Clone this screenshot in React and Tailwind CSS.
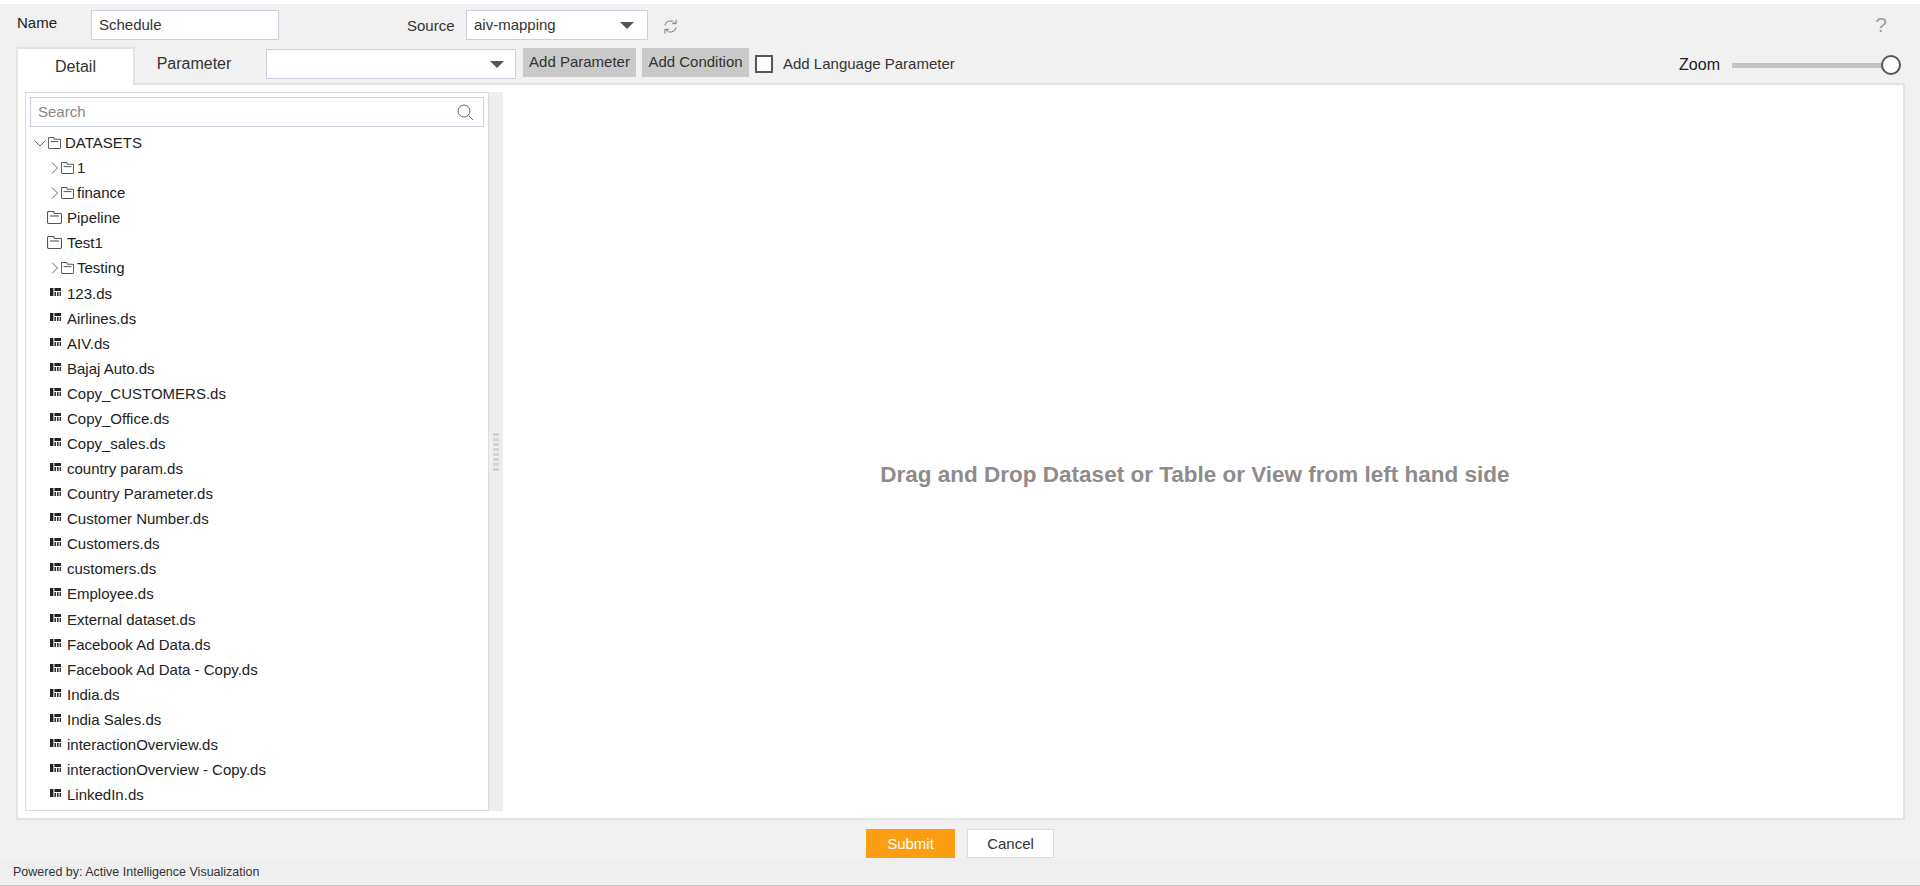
import React from "react";

const Caret = () => (
  <svg width="14" height="7" viewBox="0 0 14 7" className="block"><path d="M0 0H14L7 7Z" fill="#555" /></svg>
);
const Chevron = ({ down }) => (
  <svg width="12" height="12" viewBox="0 0 12 12" fill="none" stroke="#666" strokeWidth="1" className="block shrink-0">
    {down ? <path d="M0.5 3.5L6 9L11.5 3.5" /> : <path d="M3 0.5L8.5 6L3 11.5" />}
  </svg>
);
const Folder = ({ w = 13 }) => (
  <svg width={w} height={w === 13 ? 12 : 13} viewBox="0 0 15 13" preserveAspectRatio="none" fill="none" stroke="#555" strokeWidth="1.1" className="block shrink-0">
    <path d="M0.5 2.5V11A1.5 1.5 0 0 0 2 12.5H13A1.5 1.5 0 0 0 14.5 11V3.5A1 1 0 0 0 13.5 2.5H7.5L6.5 0.5H1.5A1 1 0 0 0 0.5 1.5Z" />
    <path d="M3 5H12" />
  </svg>
);
const Ds = () => (
  <svg width="11" height="8" viewBox="0 0 11 8" className="block shrink-0 -mt-[3px]">
    <path d="M0 0H3.4V8H0Z" fill="#222" />
    <path d="M4.4 0H11V3H4.4Z" fill="#222" />
    <path d="M4.4 4H6V8H4.4ZM7 4H8.6V8H7ZM9.6 4H11V8H9.6Z" fill="#333" />
  </svg>
);

const dsFiles = [
  "123.ds", "Airlines.ds", "AIV.ds", "Bajaj Auto.ds", "Copy_CUSTOMERS.ds", "Copy_Office.ds", "Copy_sales.ds",
  "country param.ds", "Country Parameter.ds", "Customer Number.ds", "Customers.ds", "customers.ds", "Employee.ds",
  "External dataset.ds", "Facebook Ad Data.ds", "Facebook Ad Data - Copy.ds", "India.ds", "India Sales.ds",
  "interactionOverview.ds", "interactionOverview - Copy.ds", "LinkedIn.ds",
];

const Row = ({ children, pl }) => (
  <div className={`flex h-[25.08px] items-center ${pl}`}>{children}</div>
);

const Tree = () => (
  <div className="text-[15px] leading-none text-[#222]">
    <Row pl="pl-[8px]">
      <Chevron down />
      <span className="ml-[2px]"><Folder /></span>
      <span className="ml-[4px]">DATASETS</span>
    </Row>
    <Row pl="pl-[23px]"><Chevron /><Folder /><span className="ml-[3px]">1</span></Row>
    <Row pl="pl-[23px]"><Chevron /><Folder /><span className="ml-[3px]">finance</span></Row>
    <Row pl="pl-[21px]"><Folder w={15} /><span className="ml-[5px]">Pipeline</span></Row>
    <Row pl="pl-[21px]"><Folder w={15} /><span className="ml-[5px]">Test1</span></Row>
    <Row pl="pl-[23px]"><Chevron /><Folder /><span className="ml-[3px]">Testing</span></Row>
    {dsFiles.map((f) => (
      <Row key={f} pl="pl-[24px]"><Ds /><span className="ml-[6px]">{f}</span></Row>
    ))}
  </div>
);

export default function App() {
  return (
    <div className="flex h-[886px] w-[1920px] flex-col overflow-hidden bg-white font-['Liberation_Sans',Arial,sans-serif] text-[15px] text-[#333]">
      <div className="mt-[4px] flex flex-1 flex-col bg-[#f1f1f1]">
        {/* Row 1 */}
        <div className="flex h-[43px] shrink-0 items-start pt-[6px]">
          <span className="ml-[17px] mt-[5px] w-[74px] leading-none text-[#222]">Name</span>
          <div className="flex h-[30px] w-[188px] items-center border border-[#c8d0de] bg-white pl-[7px] pt-[1px] text-[#333]">Schedule</div>
          <span className="ml-[128px] mt-[8px] w-[59px] leading-none text-[#333]">Source</span>
          <div className="flex h-[30px] w-[182px] items-center justify-between border border-[#c8d0de] bg-white pl-[7px] pr-[13px]">
            <span>aiv-mapping</span><Caret />
          </div>
          <svg width="15" height="15" viewBox="0 0 16 16" fill="none" stroke="#777" strokeWidth="1" className="ml-[15px] mt-[9px]">
            <path d="M2 7A6 5.5 0 0 1 13 4.5M14 9A6 5.5 0 0 1 3 11.5" />
            <path d="M9.5 5H14V0.5M6.5 11H2V15.5" />
          </svg>
          <span className="ml-auto mr-[33px] mt-[1px] text-[21px] leading-[28px] text-[#a0a0a0]">?</span>
        </div>
        {/* Row 2 */}
        <div className="relative z-10 -mb-[2px] flex h-[38px] shrink-0 items-start">
          <div className="ml-[16px] flex h-[38px] w-[119px] items-center justify-center border-2 border-b-0 border-[#e3e3e3] bg-white text-[16px] text-[#333]">Detail</div>
          <span className="flex h-[34px] w-[118px] items-center justify-center text-[16px] leading-none text-[#333]">Parameter</span>
          <div className="ml-[13px] mt-[2px] flex h-[30px] w-[250px] items-center justify-end border border-[#c8d0de] bg-white pr-[11px]"><Caret /></div>
          <button className="ml-[7px] mt-[1px] h-[29px] w-[113px] bg-[#c9c9c9] text-center text-[15px] text-[#333]">Add Parameter</button>
          <button className="ml-[6px] mt-[1px] h-[29px] w-[107px] bg-[#c9c9c9] text-center text-[15px] text-[#333]">Add Condition</button>
          <span className="ml-[6px] mt-[8px] h-[18px] w-[18px] border-2 border-[#555] bg-white" />
          <span className="ml-[10px] mt-[9px] leading-none text-[#333]">Add Language Parameter</span>
          <span className="ml-auto mt-[10px] text-[16px] leading-none text-[#222]">Zoom</span>
          <div className="relative ml-[12px] mr-[35px] mt-[16px] h-[5px] w-[153px] bg-[#c4c4c4]">
            <span className="absolute right-[-16px] top-[-8px] h-[20px] w-[20px] rounded-full border-2 border-[#555] bg-white" />
          </div>
        </div>
        {/* Main panel */}
        <div className="ml-[16px] mr-[15px] flex h-[737px] shrink-0 border-2 border-[#e3e3e3] bg-white pb-[7px] pl-[7px] pt-[7px]">
          <div className="h-full w-[464px] shrink-0 overflow-hidden border border-[#dcdcdc] bg-white px-[4px] pt-[4px]">
            <div className="flex h-[30px] items-center justify-between border border-[#c8d0de] bg-white pl-[7px] pr-[9px] text-[#888]">
              <span>Search</span>
              <svg width="17" height="17" viewBox="0 0 17 17" fill="none" stroke="#666" strokeWidth="1">
                <circle cx="7" cy="7" r="6" /><path d="M11.5 11.5L16 16" />
              </svg>
            </div>
            <div className="-ml-[4px] mt-[3px]"><Tree /></div>
          </div>
          <div className="flex h-full w-[14px] shrink-0 items-center justify-center bg-[#eeeeee]">
            <div className="grid grid-cols-2 gap-x-0 gap-y-[2px]">
              {Array.from({ length: 16 }).map((_, i) => (
                <span key={i} className="h-[3px] w-[3px] bg-[#d4d4d4]" />
              ))}
            </div>
          </div>
          <div className="flex flex-1 items-center justify-center pr-[16px] pt-[46px] text-[22.5px] font-bold text-[#8f8b8b]">
            Drag and Drop Dataset or Table or View from left hand side
          </div>
        </div>
        {/* Actions */}
        <div className="flex h-[40px] shrink-0 items-start justify-center gap-[12px] pt-[9px]">
          <button className="h-[29px] w-[89px] bg-[#fb9e14] pt-[2px] text-center text-[15px] text-white">Submit</button>
          <button className="h-[29px] w-[87px] border border-[#dcdcdc] bg-white pt-[2px] text-center text-[15px] text-[#333]">Cancel</button>
        </div>
        {/* Footer */}
        <div className="flex h-[26px] shrink-0 items-center border-b border-[#c4c4c4] bg-[#efefef] pl-[13px] text-[12.5px] text-[#333]">
          Powered by: Active Intelligence Visualization
        </div>
      </div>
    </div>
  );
}
